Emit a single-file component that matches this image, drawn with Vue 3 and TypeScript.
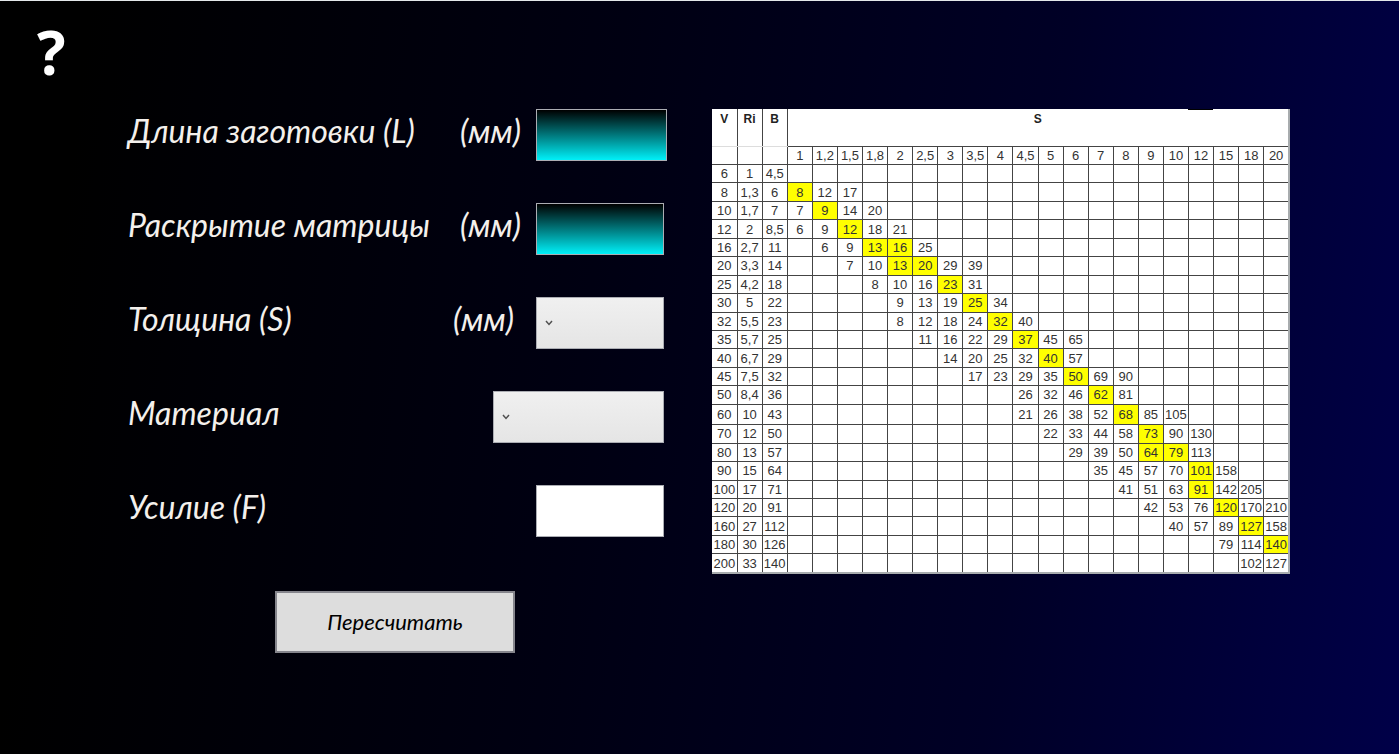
<script setup lang="ts">
import { ref } from 'vue'

interface TableRow {
  head: string[]
  start: number
  values: number[]
  marked: number[]
  tall?: boolean
}

const thicknesses: string[] = [
  '1', '1,2', '1,5', '1,8', '2', '2,5', '3', '3,5', '4', '4,5',
  '5', '6', '7', '8', '9', '10', '12', '15', '18', '20',
]

// start: index of the first filled thickness column; marked: highlighted column indexes
const rows: TableRow[] = [
  { head: ['6', '1', '4,5'], start: 0, values: [], marked: [] },
  { head: ['8', '1,3', '6'], start: 0, values: [8, 12, 17], marked: [0] },
  { head: ['10', '1,7', '7'], start: 0, values: [7, 9, 14, 20], marked: [1] },
  { head: ['12', '2', '8,5'], start: 0, values: [6, 9, 12, 18, 21], marked: [2] },
  { head: ['16', '2,7', '11'], start: 1, values: [6, 9, 13, 16, 25], marked: [3, 4] },
  { head: ['20', '3,3', '14'], start: 2, values: [7, 10, 13, 20, 29, 39], marked: [4, 5] },
  { head: ['25', '4,2', '18'], start: 3, values: [8, 10, 16, 23, 31], marked: [6] },
  { head: ['30', '5', '22'], start: 4, values: [9, 13, 19, 25, 34], marked: [7] },
  { head: ['32', '5,5', '23'], start: 4, values: [8, 12, 18, 24, 32, 40], marked: [8] },
  { head: ['35', '5,7', '25'], start: 5, values: [11, 16, 22, 29, 37, 45, 65], marked: [9] },
  { head: ['40', '6,7', '29'], start: 6, values: [14, 20, 25, 32, 40, 57], marked: [10] },
  { head: ['45', '7,5', '32'], start: 7, values: [17, 23, 29, 35, 50, 69, 90], marked: [11] },
  { head: ['50', '8,4', '36'], start: 9, values: [26, 32, 46, 62, 81], marked: [12] },
  { head: ['60', '10', '43'], start: 9, values: [21, 26, 38, 52, 68, 85, 105], marked: [13], tall: true },
  { head: ['70', '12', '50'], start: 10, values: [22, 33, 44, 58, 73, 90, 130], marked: [14] },
  { head: ['80', '13', '57'], start: 11, values: [29, 39, 50, 64, 79, 113], marked: [14, 15] },
  { head: ['90', '15', '64'], start: 12, values: [35, 45, 57, 70, 101, 158], marked: [16] },
  { head: ['100', '17', '71'], start: 13, values: [41, 51, 63, 91, 142, 205], marked: [16] },
  { head: ['120', '20', '91'], start: 14, values: [42, 53, 76, 120, 170, 210], marked: [17] },
  { head: ['160', '27', '112'], start: 15, values: [40, 57, 89, 127, 158], marked: [18] },
  { head: ['180', '30', '126'], start: 17, values: [79, 114, 140], marked: [19] },
  { head: ['200', '33', '140'], start: 18, values: [102, 127], marked: [] },
]

const blankLength = ref('')
const dieOpening = ref('')
const thickness = ref('')
const material = ref('')
const force = ref('')
</script>

<template>
  <div class="window">
    <header class="top">
      <button type="button" class="help">?</button>
    </header>
    <main class="content">
      <form class="form" @submit.prevent>
        <div class="row">
          <label for="length">Длина заготовки (L)</label>
          <span class="unit">(мм)</span>
          <input id="length" v-model="blankLength" class="field glow wide" type="text" />
        </div>
        <div class="row">
          <label for="opening">Раскрытие матрицы</label>
          <span class="unit">(мм)</span>
          <input id="opening" v-model="dieOpening" class="field glow" type="text" />
        </div>
        <div class="row">
          <label for="thickness">Толщина (S)</label>
          <span class="unit far">(мм)</span>
          <div class="pick">
            <select id="thickness" v-model="thickness" class="field"><option value=""></option></select>
            <svg viewBox="0 0 8 6" aria-hidden="true"><path d="M1 1 L4 4.4 L7 1" /></svg>
          </div>
        </div>
        <div class="row">
          <label for="material">Материал</label>
          <div class="pick">
            <select id="material" v-model="material" class="field long"><option value=""></option></select>
            <svg viewBox="0 0 8 6" aria-hidden="true"><path d="M1 1 L4 4.4 L7 1" /></svg>
          </div>
        </div>
        <div class="row">
          <label for="force">Усилие (F)</label>
          <input id="force" v-model="force" class="field" type="text" />
        </div>
        <button type="submit" class="submit">Пересчитать</button>
      </form>
      <div class="sheet">
        <table class="chart">
          <colgroup>
            <col v-for="n in 23" :key="n" />
          </colgroup>
          <thead>
            <tr class="title">
              <th>V</th>
              <th>Ri</th>
              <th>B</th>
              <th class="span" colspan="20">S</th>
            </tr>
            <tr class="sizes">
              <td></td>
              <td></td>
              <td></td>
              <td v-for="t in thicknesses" :key="t">{{ t }}</td>
            </tr>
          </thead>
          <tbody>
            <tr v-for="row in rows" :key="row.head[0]" :class="{ tall: row.tall }">
              <td v-for="(h, i) in row.head" :key="i">{{ h }}</td>
              <td v-for="(t, i) in thicknesses" :key="t" :class="{ marked: row.marked.includes(i) }">
                {{ row.values[i - row.start] ?? '' }}
              </td>
            </tr>
          </tbody>
        </table>
      </div>
    </main>
  </div>
</template>

<style>
body {
  margin: 0;
  background: #000;
}
</style>

<style scoped>
.window {
  box-sizing: border-box;
  min-height: 100vh;
  border-top: 1px solid #e4e8ea;
  background: linear-gradient(97deg, #000 6%, #000012 42%, #000026 72%, #000048 100%);
  color: #f4f0ec;
}

.top {
  box-sizing: border-box;
  height: 108px;
  padding: 20px 37px;
}

.help {
  padding: 0;
  border: 0;
  background: none;
  color: #fff;
  font: bold 60px/62px "Open Sans", "Noto Sans", sans-serif;
}

.content {
  display: flex;
  align-items: flex-start;
  gap: 45px;
  padding: 0 109px 40px 128px;
}

.form {
  display: flex;
  flex: none;
  flex-direction: column;
  gap: 42px;
  width: 539px;
  font: italic 32px/44px Lato, "Noto Sans", sans-serif;
}

.row {
  display: flex;
  align-items: center;
  height: 52px;
}

.row label {
  flex: 1;
  padding-bottom: 8px;
  white-space: nowrap;
}

.unit {
  padding: 0 15px 8px 0;
}

.unit.far {
  padding-right: 22px;
}

.field {
  box-sizing: border-box;
  width: 128px;
  height: 52px;
  margin: 0 3px 0 0;
  padding: 0 8px;
  border: 1px solid #abadb3;
  border-radius: 0;
  background: #fff;
  font: inherit;
  appearance: none;
}

.glow {
  background: linear-gradient(#000, #00f0f8);
  color: #fff;
}

.wide {
  width: 131px;
  margin-right: 0;
}

.pick {
  display: grid;
  align-items: center;
}

.pick > * {
  grid-area: 1 / 1;
}

.pick .field {
  background: linear-gradient(#f0f0f0, #e5e5e5);
}

.pick .long {
  width: 171px;
}

.pick svg {
  width: 8px;
  height: 6px;
  margin-left: 9px;
  fill: none;
  stroke: #505050;
  stroke-width: 1.5;
  pointer-events: none;
}

.submit {
  box-sizing: border-box;
  width: 240px;
  height: 62px;
  margin: 12px 0 0 147px;
  padding: 0;
  border: 2px solid #85858c;
  background: #ddd;
  color: #000;
  font: italic 22px/26px Lato, "Noto Sans", sans-serif;
}

.sheet {
  flex: 1;
  min-width: 0;
}

.chart {
  width: 100%;
  height: 465px;
  border-collapse: collapse;
  table-layout: fixed;
  border-right: 2px solid #a8acae;
  border-bottom: 2px solid #a8acae;
  background: #fff;
  color: #333;
  font: 13px/16px "Liberation Sans Narrow", "Liberation Sans", sans-serif;
  text-align: center;
}

.chart td,
.chart th {
  height: 16px;
  padding: 1px 0 0;
  border: 1px solid #444;
  white-space: nowrap;
}

.chart .tall td {
  height: 18px;
}

.chart tr > :first-child {
  border-left: 0;
}

.chart .title th {
  position: relative;
  height: 37px;
  padding: 0;
  border-top: 0;
  border-bottom-color: #ddd;
  color: #222;
  font: bold 12px/20px "Liberation Sans", sans-serif;
  vertical-align: top;
}

.chart .title .span {
  border-bottom-color: #444;
}

.title .span::before {
  position: absolute;
  top: 0;
  right: 15%;
  width: 5%;
  height: 1px;
  background: #000;
  content: "";
}

.chart .sizes td:nth-child(-n + 3) {
  border-top-color: #ddd;
}

.chart .marked {
  background: #ff0;
}
</style>
